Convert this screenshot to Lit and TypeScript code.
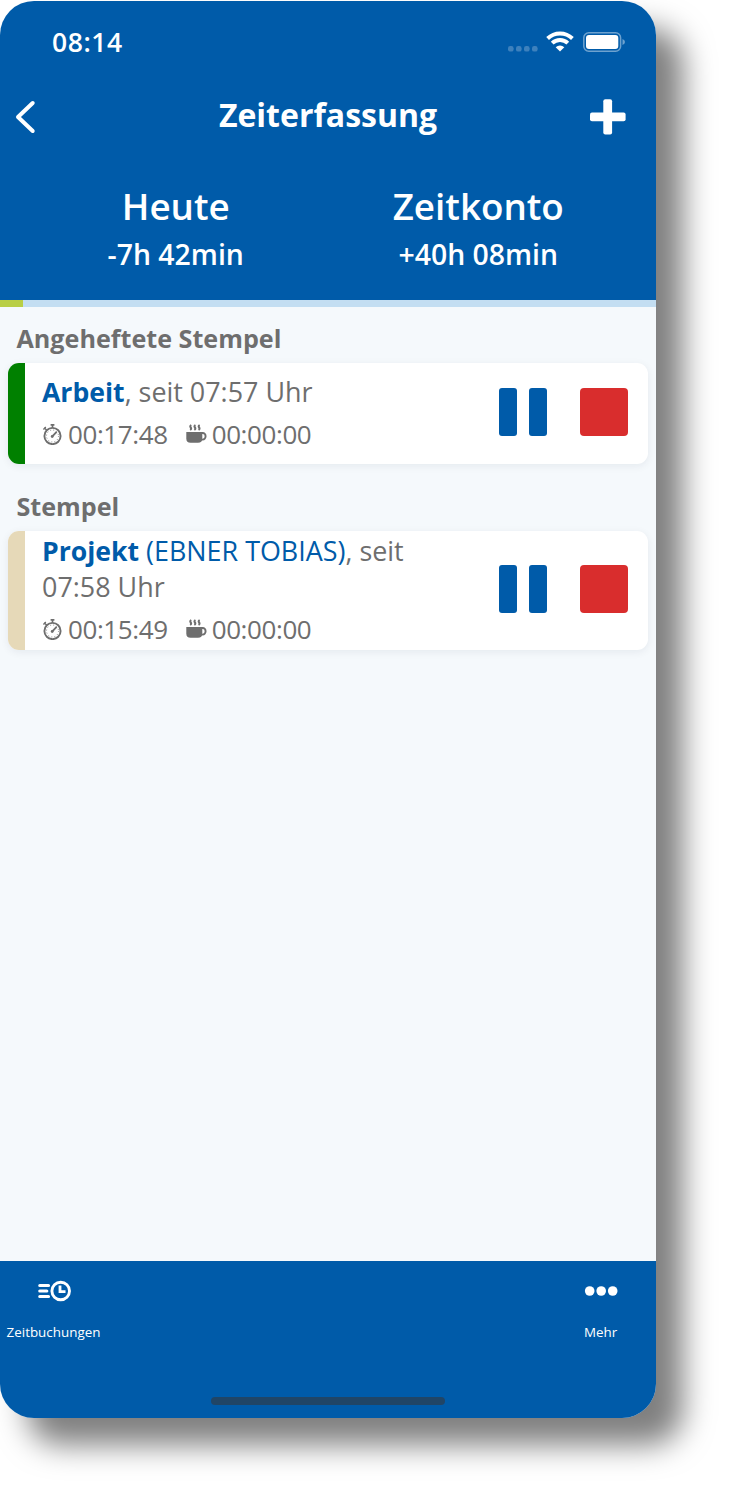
import { LitElement, html, css, svg } from "lit";
import { customElement, property } from "lit/decorators.js";

const stopwatch = html`<svg class="watch" width="20" height="22" viewBox="0 0 20 22" fill="none" stroke="#6e6e6e">
  <circle cx="10.500" cy="13" r="8.100" stroke-width="1.900" />
  <path d="M10.500 2v3M8.600 1.900h3.800" stroke-width="1.600" />
  <path d="M2 4.700l2.600 2.400M1.400 6.500l2.400-2.400" stroke-width="1.400" />
  <path d="M10.300 13.300l4.300-4.400" stroke-width="1.900" />
  <circle cx="10.200" cy="13.500" r="1.400" fill="#6e6e6e" stroke="none" />
  <circle cx="10.500" cy="13" r="6" stroke-width=".8" stroke-dasharray="1 2.140" />
</svg>`;

const cup = html`<svg class="cup" width="21" height="20" viewBox="0 0 21 20" fill="none" stroke="#6e6e6e">
  <path d="M.3 8H16.300v6.500q0 4.300-4.300 4.300H4.600q-4.300 0-4.300-4.300z" fill="#6e6e6e" stroke="none" />
  <path d="M15.500 9h1.200a2.900 3.300 0 0 1 0 6.600h-1.500" stroke-width="1.900" />
  <path d="M5.300 1.200q-1.800 1-.6 2.300t-.6 2.300M9.500 1.200q-1.800 1-.6 2.300t-.6 2.300M13.700 1.200q-1.800 1-.6 2.300t-.6 2.300" stroke-width="2" />
</svg>`;

@customElement("stamp-card")
export class StampCard extends LitElement {
  @property() name = "";
  @property() person = "";
  @property() since = "";
  @property() work = "";
  @property() pause = "";
  @property() tone = "green";

  static styles = css`
    :host { display: block; }
    .card {
      display: flex; height: 101px; box-sizing: border-box; border-radius: 11px;
      background: #fff; overflow: hidden; box-shadow: 0 2px 8px rgba(0, 30, 60, 0.07);
    }
    .tall { height: 119px; }
    .stripe { width: 17px; flex: none; background: #008000; }
    .sand { background: #e6d9b8; }
    .body {
      display: flex; flex-direction: column; justify-content: center;
      width: 400px; padding: 0 0 1px 17px; box-sizing: border-box; flex: none;
    }
    .title { font-size: 26.900px; line-height: 36px; color: #6e6e6e; }
    .title b { font-size: 26.600px; }
    .title b, .title span { color: #005ba9; }
    .times { display: flex; align-items: center; font-size: 26px; line-height: 36px; height: 36px; margin-top: 6px; color: #6e6e6e; letter-spacing: -0.4px; }
    .watch { margin-right: 6px; }
    .cup { margin-left: 18px; margin-right: 5px; margin-top: -1px; }
    .actions { display: flex; align-items: center; gap: 32.500px; margin-left: 73.500px; padding-bottom: 3px; }
    .pause { display: flex; gap: 12px; }
    .pause i { width: 18.300px; height: 48px; border-radius: 3px; background: #005ba9; }
    .stop { width: 48px; height: 48px; border-radius: 4px; background: #d92d2d; }
  `;

  render() {
    return html`<div class="card ${this.person ? "tall" : ""}">
      <div class="stripe ${this.tone}"></div>
      <div class="body">
        <div class="title"><b>${this.name}</b>${this.person ? html` <span>(${this.person})</span>` : ""}, seit ${this.since} Uhr</div>
        <div class="times">${stopwatch}<span>${this.work}</span>${cup}<span>${this.pause}</span></div>
      </div>
      <div class="actions"><div class="pause"><i></i><i></i></div><div class="stop"></div></div>
    </div>`;
  }
}

@customElement("app-root")
export class AppRoot extends LitElement {
  static styles = css`
    :host { display: block; height: 1489px; overflow: hidden; background: #fff; font-family: "Open Sans", sans-serif; }
    .phone {
      display: flex; flex-direction: column; width: 656px; height: 1417px; margin-top: 1px;
      border-radius: 34px; background: #f5f9fc; box-shadow: 27px 27px 30px rgba(0, 0, 0, 0.5);
    }
    .head { height: 299px; background: #005ba9; color: #fff; border-radius: 34px 34px 0 0; }
    .status { display: flex; align-items: center; height: 82px; padding: 0 30px 0 52px; }
    .clock { flex: 1; font-size: 26.500px; font-weight: 600; letter-spacing: 0.6px; }
    .signal { margin-right: 8px; margin-top: 13px; }
    .wifi { margin-right: 9px; margin-top: -1px; }
    .bar { display: flex; align-items: center; height: 67px; padding: 0 30px 0 15px; }
    .bar h1 { flex: 1; margin: 0 0 3px 15px; text-align: center; font-size: 32px; line-height: 44px; font-weight: 700; }
    .lead { width: 36px; display: flex; }
    .totals { display: flex; padding: 31px 27px 0 25px; }
    .total { flex: 1; text-align: center; font-weight: 600; }
    .total + .total { padding-left: 1px; }
    .label { font-size: 36.800px; line-height: 50px; }
    .value { font-size: 28.400px; line-height: 38px; margin-top: 4px; }
    .progress { height: 6.500px; background: #c3def2; flex: none; }
    .done { width: 23px; height: 6.500px; background: #b9cf45; }
    .main { flex: 1; padding: 0 8px; }
    h2 { margin: 0; padding: 13.500px 8.500px 0; height: 43px; font-size: 25.150px; line-height: 36px; font-weight: 700; color: #6e6e6e; }
    h2.next { padding-top: 24px; }
    .foot {
      display: flex; flex-direction: column; justify-content: space-between; height: 157px;
      border-radius: 0 0 34px 34px; background: #005ba9; color: #fff;
    }
    .tabs { display: flex; justify-content: space-between; padding: 19px 6px 0 4px; }
    .tab { display: flex; flex-direction: column; align-items: center; width: 99px; font-size: 13.400px; line-height: 20px; gap: 20px; }
    .tab svg { display: block; }
    .home { width: 234px; height: 8px; margin: 0 auto 13px; border-radius: 4px; background: #204566; }
  `;

  render() {
    return html`<div class="phone">
      <header class="head">
        <div class="status">
          <span class="clock">08:14</span>
          <svg class="signal" width="30" height="6" viewBox="0 0 30 6" fill="#3d81bd">
            ${[3, 11, 19, 27].map((x) => svg`<rect x=${x - 3} y="0" width="5.600" height="5.600" rx="2.200" />`)}
          </svg>
          <svg class="wifi" width="28" height="21" viewBox="0 0 28 21" fill="none" stroke="#fff">
            <path d="M1.600 7.500a17.800 17.800 0 0 1 24.800 0M6.200 12.200a11.200 11.200 0 0 1 15.600 0" stroke-width="3.900" />
            <path d="M14 20.500l-4.300-4.300a6.200 6.200 0 0 1 8.600 0z" fill="#fff" stroke="none" />
          </svg>
          <svg width="43" height="20" viewBox="0 0 43 20">
            <rect x=".8" y=".8" width="36.800" height="18.400" rx="5" fill="none" stroke="#6ea2cf" stroke-width="1.500" />
            <rect x="3" y="3" width="32.300" height="14" rx="3" fill="#fff" />
            <path d="M39.500 7v6q2.500-.8 2.500-3t-2.500-3z" fill="#6ea2cf" />
          </svg>
        </div>
        <div class="bar">
          <div class="lead"><svg width="21" height="34" viewBox="0 0 21 34" fill="none" stroke="#fff" stroke-width="4" stroke-linecap="round" stroke-linejoin="round"><path d="M17.700 3L3 17l14.700 14" /></svg></div>
          <h1>Zeiterfassung</h1>
          <svg width="36" height="36" viewBox="0 0 36 36" fill="#fff"><rect x="13.300" y=".2" width="8.800" height="35.300" rx="2" /><rect y="13.400" width="35.600" height="8.800" rx="2" /></svg>
        </div>
        <div class="totals">
          <div class="total"><div class="label">Heute</div><div class="value">-7h 42min</div></div>
          <div class="total"><div class="label">Zeitkonto</div><div class="value">+40h 08min</div></div>
        </div>
      </header>
      <div class="progress"><div class="done"></div></div>
      <main class="main">
        <h2>Angeheftete Stempel</h2>
        <stamp-card name="Arbeit" since="07:57" work="00:17:48" pause="00:00:00"></stamp-card>
        <h2 class="next">Stempel</h2>
        <stamp-card name="Projekt" person="EBNER TOBIAS" since="07:58" work="00:15:49" pause="00:00:00" tone="sand"></stamp-card>
      </main>
      <footer class="foot">
        <div class="tabs">
          <div class="tab">
            <svg width="34" height="22" viewBox="0 0 34 22" fill="none" stroke="#fff">
              <path d="M2.800 5.500h8.700M2.800 11h7M2.800 16.500h8.700" stroke-width="3.200" stroke-linecap="round" />
              <circle cx="23.700" cy="11" r="8.800" stroke-width="2.900" />
              <path d="M23 5.500v6.200h5.500" stroke-width="2.800" />
            </svg>
            <span>Zeitbuchungen</span>
          </div>
          <div class="tab">
            <svg width="34" height="22" viewBox="0 0 34 22" fill="#fff"><circle cx="5.700" cy="11" r="4.800" /><circle cx="17.200" cy="11" r="4.800" /><circle cx="28.700" cy="11" r="4.800" /></svg>
            <span>Mehr</span>
          </div>
        </div>
        <div class="home"></div>
      </footer>
    </div>`;
  }
}
